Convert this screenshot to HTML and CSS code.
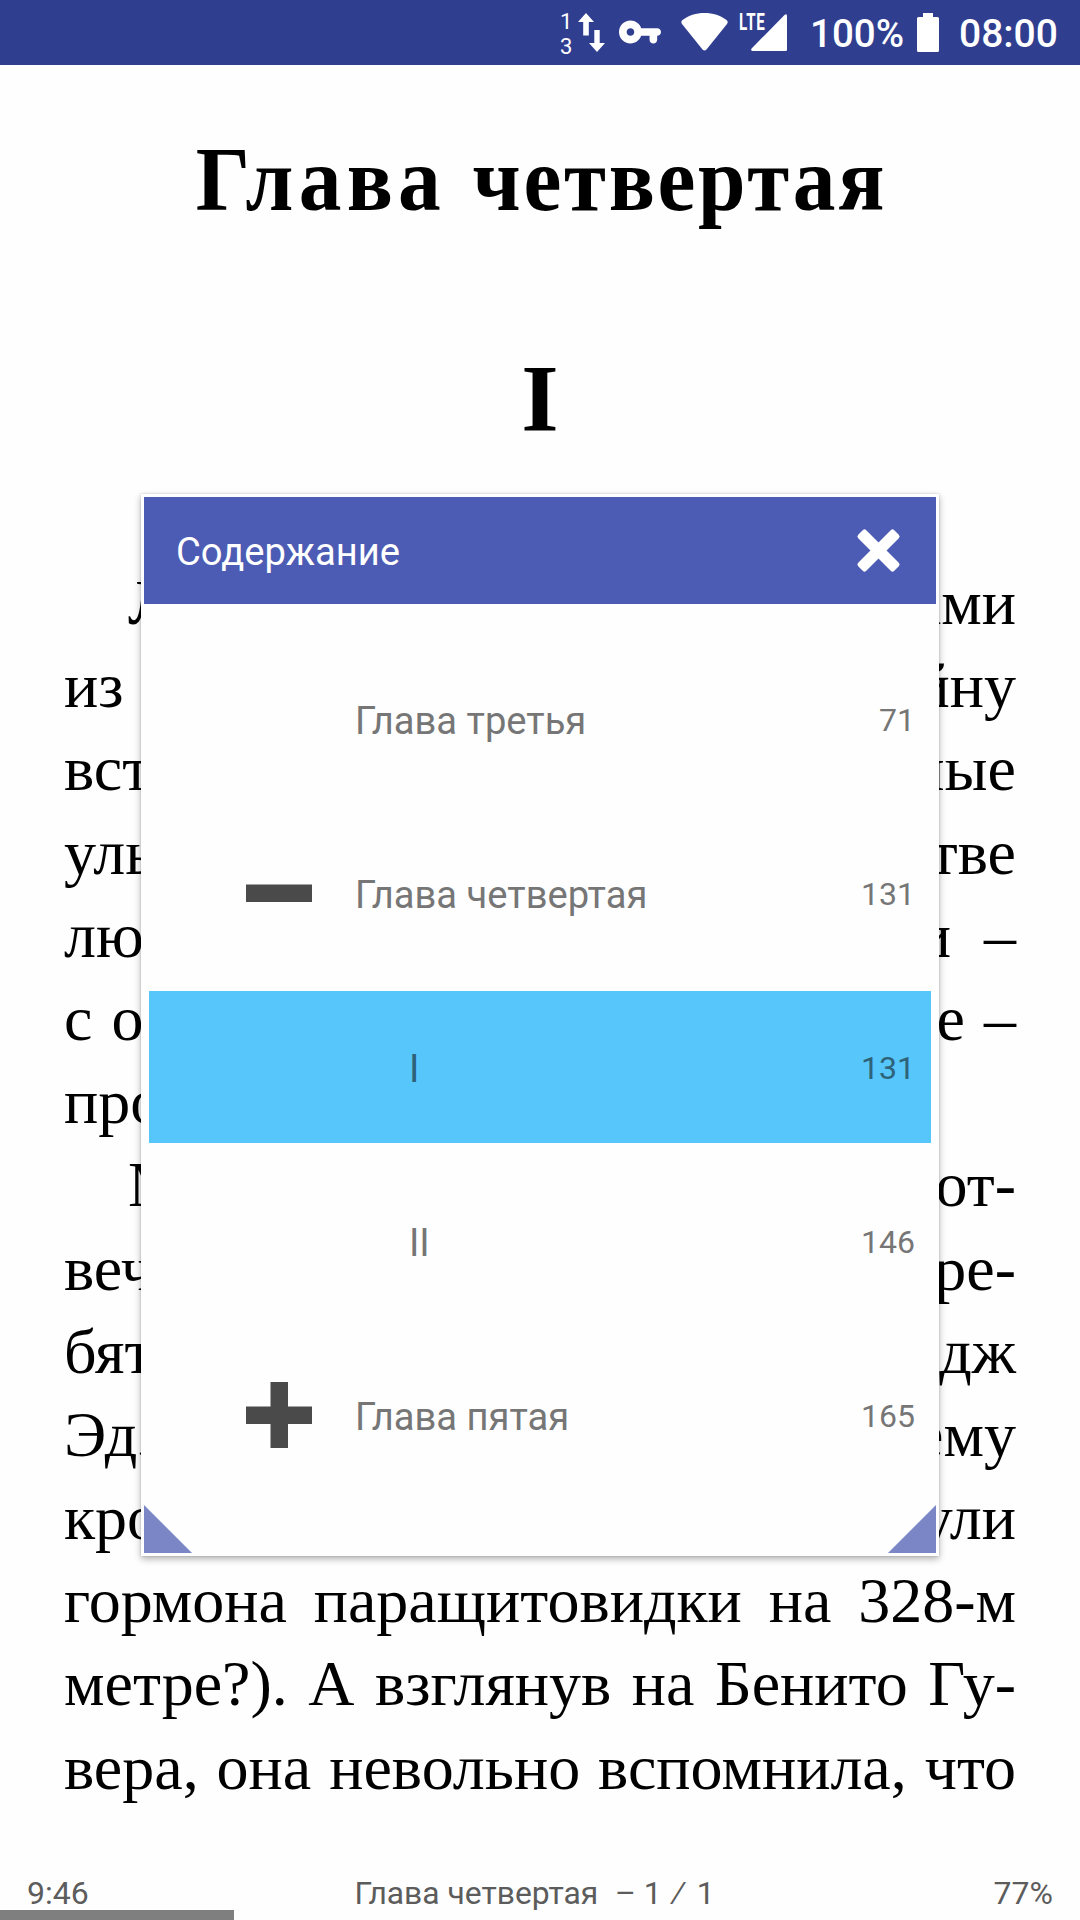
FILE: index.html
```html
<!DOCTYPE html>
<html lang="ru">
<head>
<meta charset="utf-8">
<title>Глава четвертая</title>
<link rel="stylesheet" href="styles.css">
</head>
<body>
<div class="screen">
  <header class="status">
    <div class="net-count"><span>1</span><span>3</span></div>
    <svg class="ic-arrows" width="27" height="40" viewBox="0 0 27 40"><path fill="#fff" d="M8 0L16 9H10.800V22.500H5.200V9H0zM16.300 17H21.700V30H27L19 39L11 30H16.300z"/></svg>
    <svg class="ic-key" width="42" height="24" viewBox="1 6 22 12"><path fill="#fff" d="M12.650 10C11.830 7.670 9.610 6 7 6c-3.310 0-6 2.690-6 6s2.690 6 6 6c2.610 0 4.830-1.670 5.650-4H17v2c0 1.100.900 2 2 2s2-.900 2-2v-2c1.100 0 2-.900 2-2s-.900-2-2-2zM7 14c-1.100 0-2-.900-2-2s.900-2 2-2 2 .900 2 2-.900 2-2 2z"/></svg>
    <svg class="ic-wifi" width="47" height="38" viewBox="0 0 47 38"><path fill="#fff" d="M23.500 0C32 0 39.500 2.500 45.500 7Q47.600 8.700 46 11L25.500 36.500Q23.500 38.500 21.500 36.500L1 11Q-.6 8.700 1.500 7C7.500 2.500 15 0 23.500 0z"/></svg>
    <div class="cell">
      <span class="lte">LTE</span>
      <svg class="ic-cell" width="36" height="37" viewBox="0 0 36 37"><path fill="#fff" d="M36 1.500V35.500Q36 37 34.500 37H1.500Q-.8 36.500 .6 34.500L33.500 1Q35.500 -.6 36 1.500z"/></svg>
    </div>
    <span class="level">100%</span>
    <svg class="ic-battery" width="22" height="39" viewBox="0 0 22 39"><path fill="#fff" d="M6 0H16V4H20.500Q22 4 22 5.500V37.500Q22 39 20.500 39H1.500Q0 39 0 37.500V5.500Q0 4 1.500 4H6z"/></svg>
    <span class="clock">08:00</span>
  </header>

  <main class="page">
    <h1><span class="loose">Глава </span>четвертая</h1>
    <h2>I</h2>
    <div class="text">
      <p class="first">Лифт был заполнен мужчинами</p>
      <p>из Альфа-раздевален, и Ленайну</p>
      <p>встретили дружеские, нежные</p>
      <p>улыбки и кивки. Ее в обществе</p>
      <p>любили; почти со всеми ними –</p>
      <p>с одним раньше, с другим позже –</p>
      <p class="last">проводила она ночь.</p>
      <p class="first">Милые ребята, думала она, от-</p>
      <p>вечая на приветствия. Чудные ре-</p>
      <p>бята! Только жаль, что Джордж</p>
      <p>Эдзел лопоухий (быть может, ему</p>
      <p>крошечку лишнего впрыснули</p>
      <p>гормона паращитовидки на 328-м</p>
      <p>метре?). А взглянув на Бенито Гу-</p>
      <p>вера, она невольно вспомнила, что</p>
    </div>
  </main>

  <footer class="foot">
    <span>9:46</span>
    <span class="foot-title">Глава четвертая&nbsp; <span class="dash">–</span> 1 <span class="slash">⁄</span> 1</span>
    <span class="foot-end">77%</span>
  </footer>
  <div class="progress"></div>

  <section class="dialog">
    <div class="dialog-head">
      <span>Содержание</span>
      <svg width="47" height="47" viewBox="-23.500 -23.500 47 47"><g fill="#fff"><rect x="-25.500" y="-5.700" width="51" height="11.400" rx="2.500" transform="rotate(45)"/><rect x="-25.500" y="-5.700" width="51" height="11.400" rx="2.500" transform="rotate(-45)"/></g></svg>
    </div>
    <ul class="toc">
      <li><i></i><span class="name">Глава третья</span><span class="num">71</span></li>
      <li><i><svg width="66" height="66"><path fill="#4a4a4a" d="M0 24.500H66V42H0z"/></svg></i><span class="name">Глава четвертая</span><span class="num">131</span></li>
      <li class="current"><i></i><span class="name sub">I</span><span class="num">131</span></li>
      <li><i></i><span class="name sub">II</span><span class="num">146</span></li>
      <li><i><svg width="66" height="66"><path fill="#4a4a4a" d="M0 24.500H24.500V0H42V24.500H66V42H42V66H24.500V42H0z"/></svg></i><span class="name">Глава пятая</span><span class="num">165</span></li>
    </ul>
    <svg class="grip grip-l" width="48" height="48"><path fill="#7b86c6" d="M0 0L48 48H0z"/></svg>
    <svg class="grip grip-r" width="48" height="48"><path fill="#7b86c6" d="M48 0V48H0z"/></svg>
  </section>
</div>
</body>
</html>
```
FILE: styles.css
```css
* { box-sizing: border-box; margin: 0; padding: 0; }
body { background: #fff; }
.screen {
  position: relative;
  width: 1080px;
  height: 1920px;
  overflow: hidden;
  display: flex;
  flex-direction: column;
  background: #fefefe;
  font-family: Roboto, "Liberation Sans", sans-serif;
}
.status {
  flex: none;
  display: flex;
  align-items: flex-start;
  height: 65px;
  padding-left: 560px;
  background: #303e90;
  color: #fff;
}
.net-count {
  width: 18px;
  display: flex;
  flex-direction: column;
  padding-top: 9px;
  font-size: 22px;
  line-height: 25px;
}
.ic-arrows { margin-top: 13px; }
.ic-key { margin: 20px 0 0 14px; }
.ic-wifi { margin: 13px 0 0 20px; }
.cell { position: relative; width: 48px; height: 65px; margin-left: 12px; }
.lte { position: absolute; left: -1px; top: 11px; font: 700 23px/23px Roboto, sans-serif; transform: scaleX(.66); transform-origin: 0 0; letter-spacing: 1px; }
.ic-cell { position: absolute; right: 1px; top: 14px; }
.level, .clock { font-size: 39px; line-height: 46px; font-weight: 500; margin-top: 11px; }
.level { margin-left: 22px; width: 94px; font-size: 38.500px; }
.ic-battery { margin: 13px 0 0 13px; }
.clock { margin-left: 20px; }

.page {
  flex: 1;
  padding: 0 64px;
  font-family: "Liberation Serif", serif;
  color: #000;
}
h1 { padding: 60px 0 0 3px; font-size: 91px; line-height: 110px; text-align: center; letter-spacing: 2.900px; white-space: nowrap; transform: scaleX(.938); }
.loose { letter-spacing: 5.600px; }
h2 { padding-top: 108px; font-size: 96px; line-height: 112px; text-align: center; }
.text { padding-top: 106px; }
.text p { height: 83.200px; font-size: 64px; line-height: 83.200px; white-space: nowrap; text-align: justify; text-align-last: justify; }
.text .first { padding-left: 64px; }
.text .last { text-align-last: left; }

.foot {
  flex: none;
  display: grid;
  grid-template-columns: 327.500px 1fr auto;
  height: 58px;
  padding: 12px 27px 0;
  font-size: 32px;
  line-height: 38px;
  color: #5c5c5c;
}
.foot-title { font-size: 31.800px; }
.dash { margin-left: 1px; }
.slash { margin: 0 7px; font-family: "Liberation Sans", sans-serif; }
.progress { position: absolute; left: 0; bottom: 0; width: 234px; height: 10px; background: #7f7f7f; }

.dialog {
  position: absolute;
  left: 141px;
  top: 494px;
  width: 798px;
  height: 1062px;
  padding: 3px;
  background: #fefefe;
  box-shadow: 0 3px 7px rgba(0, 0, 0, .3), 0 0 2px rgba(0, 0, 0, .18);
}
.dialog-head {
  display: flex;
  justify-content: space-between;
  align-items: center;
  height: 107px;
  padding: 0 34px 0 32px;
  background: #4c5bb3;
  color: #fff;
  font-size: 38.200px;
}
.dialog-head span { padding-top: 3px; }
.toc { list-style: none; padding: 39px 5px 0; }
.toc li {
  display: flex;
  align-items: center;
  height: 152px;
  margin-bottom: 22px;
  padding: 0 16px 0 97px;
  color: #767676;
}
.toc i { width: 66px; height: 66px; }
.toc .name { flex: 1; padding: 4px 0 0 43px; font-size: 38.150px; }
.toc .sub { padding-left: 97px; }
.toc .num { padding-top: 2px; font-size: 32px; }
.toc .current { background: #57c6fa; color: #2e6279; }
.grip { position: absolute; bottom: 3px; }
.grip-l { left: 3px; }
.grip-r { right: 3px; }
```
